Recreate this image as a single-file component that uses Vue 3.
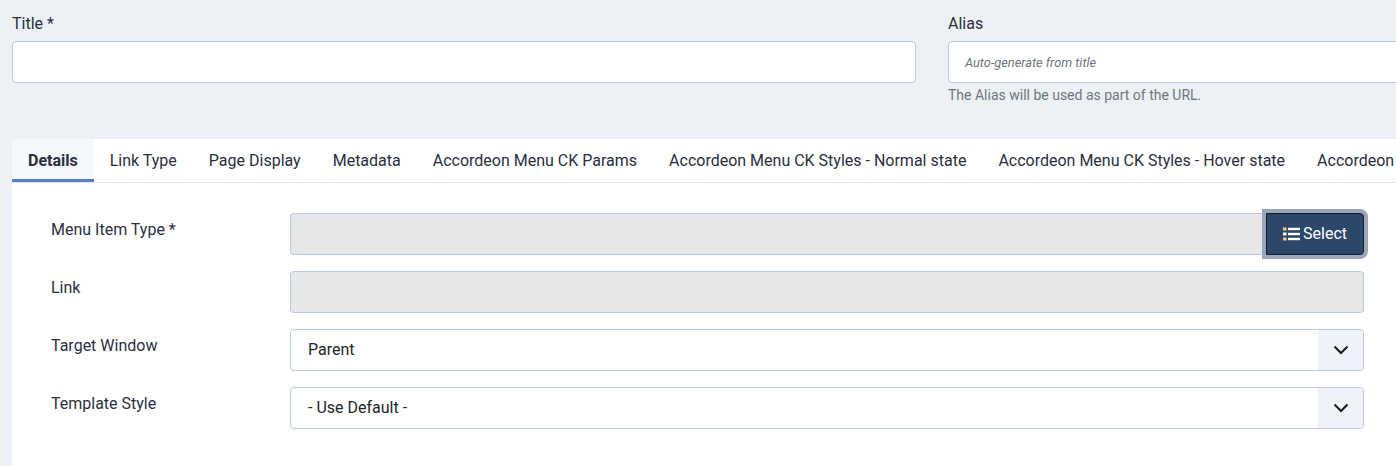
<script setup>
const tabs = [
  'Details',
  'Link Type',
  'Page Display',
  'Metadata',
  'Accordeon Menu CK Params',
  'Accordeon Menu CK Styles - Normal state',
  'Accordeon Menu CK Styles - Hover state',
  'Accordeon'
]
</script>

<template>
  <div class="page">
    <div class="head">
      <div class="field">
        <label class="label">Title *</label>
        <input class="input" type="text" />
      </div>
      <div class="field">
        <label class="label">Alias</label>
        <input class="input alias" type="text" placeholder="Auto-generate from title" />
        <div class="hint">The Alias will be used as part of the URL.</div>
      </div>
    </div>

    <div class="panel">
      <div class="tabs">
        <button
          v-for="(tab, i) in tabs"
          :key="tab"
          class="tab"
          :class="{ active: i === 0 }"
        >{{ tab }}</button>
      </div>

      <div class="form">
        <div class="row">
          <label class="row-label">Menu Item Type *</label>
          <div class="group">
            <div class="readonly"></div>
            <button class="select-btn">
              <svg class="list-icon" viewBox="0 0 17 14">
                <rect x="0" y="0.5" width="3.5" height="3" fill="#f0c987" />
                <rect x="0" y="5.5" width="3.5" height="3" fill="#fff" />
                <rect x="0" y="10.5" width="3.5" height="3" fill="#f0c987" />
                <rect x="5" y="0.8" width="12" height="2.4" fill="#fff" />
                <rect x="5" y="5.8" width="12" height="2.4" fill="#fff" />
                <rect x="5" y="10.8" width="12" height="2.4" fill="#fff" />
              </svg>
              Select
            </button>
          </div>
        </div>
        <div class="row">
          <label class="row-label">Link</label>
          <div class="group">
            <div class="readonly solo"></div>
          </div>
        </div>
        <div class="row">
          <label class="row-label">Target Window</label>
          <div class="dropdown">
            <span class="value">Parent</span>
            <span class="caret">
              <svg viewBox="0 0 16 16" width="16" height="16">
                <path d="M1.5 4.5 8 11l6.5-6.5" fill="none" stroke="#16191d" stroke-width="2" />
              </svg>
            </span>
          </div>
        </div>
        <div class="row">
          <label class="row-label">Template Style</label>
          <div class="dropdown">
            <span class="value">- Use Default -</span>
            <span class="caret">
              <svg viewBox="0 0 16 16" width="16" height="16">
                <path d="M1.5 4.5 8 11l6.5-6.5" fill="none" stroke="#16191d" stroke-width="2" />
              </svg>
            </span>
          </div>
        </div>
      </div>
    </div>
  </div>
</template>

<style>
html,
body {
  margin: 0;
  background: #edf1f6;
}
</style>

<style scoped>
.page {
  width: 1396px;
  height: 466px;
  overflow: hidden;
  box-sizing: border-box;
  padding: 12px 0 0 12px;
  background: #edf1f6;
  font-family: Roboto, "Liberation Sans", sans-serif;
  font-size: 16px;
  line-height: 24px;
  color: #22262a;
}

.head {
  display: grid;
  grid-template-columns: 904px 904px;
  column-gap: 32px;
  height: 127px;
}

.label {
  display: block;
  margin-bottom: 5px;
  color: #2b2f3f;
}

.input {
  display: block;
  box-sizing: border-box;
  width: 100%;
  height: 42px;
  padding: 1px 16px 0;
  background: #fff;
  border: 1px solid #b9c8e2;
  border-radius: 4px;
  outline: none;
  font-family: inherit;
}

.alias {
  font-size: 12.8px;
  font-style: italic;
}

.alias::placeholder {
  color: #6d757e;
  opacity: 1;
}

.hint {
  margin-top: 2px;
  font-size: 14px;
  line-height: 21px;
  color: #6d757e;
}

.panel {
  width: 1500px;
  height: 327px;
  background: #fff;
}

.tabs {
  display: flex;
  height: 44px;
  box-sizing: border-box;
  border-bottom: 1px solid #dfe5f1;
}

.tab {
  flex: none;
  height: 43px;
  padding: 2px 16px 0;
  border: 0;
  border-bottom: 3px solid transparent;
  background: none;
  font-family: inherit;
  font-size: 16px;
  color: #2b2f3f;
  white-space: nowrap;
}

.tab.active {
  background: #f4f7fb;
  border-bottom-color: #5580c2;
  font-weight: 700;
}

.form {
  display: flex;
  flex-direction: column;
  gap: 16px;
  width: 1352px;
  padding: 30px 0 0 39px;
  box-sizing: content-box;
}

.row {
  display: flex;
  height: 42px;
  width: 1313px;
}

.row-label {
  flex: none;
  width: 239px;
  padding-top: 5px;
  color: #2b2f3f;
}

.group {
  display: flex;
  flex: 1;
}

.readonly {
  flex: 1;
  box-sizing: border-box;
  background: #e7e7e7;
  border: 1px solid #b9c8e2;
  border-right: 0;
  border-radius: 4px 0 0 4px;
}

.readonly.solo {
  border-right: 1px solid #b9c8e2;
  border-radius: 4px;
}

.select-btn {
  display: flex;
  align-items: center;
  justify-content: center;
  gap: 3px;
  width: 98px;
  box-sizing: border-box;
  padding: 0 0 1px;
  background: #2d4769;
  border: 1px solid #10202f;
  border-radius: 0 4px 4px 0;
  box-shadow: 0 0 0 4px #9ba6b8;
  color: #fff;
  font-family: inherit;
  font-size: 16px;
}

.list-icon {
  width: 17px;
  height: 14px;
}

.dropdown {
  display: flex;
  flex: 1;
  align-items: center;
  justify-content: space-between;
  box-sizing: border-box;
  background: #fff;
  border: 1px solid #b9c8e2;
  border-radius: 4px;
  overflow: hidden;
}

.value {
  padding-left: 17px;
  color: #22262a;
}

.caret {
  display: flex;
  align-items: center;
  justify-content: center;
  width: 45px;
  height: 100%;
  background: #eef3fb;
}
</style>
